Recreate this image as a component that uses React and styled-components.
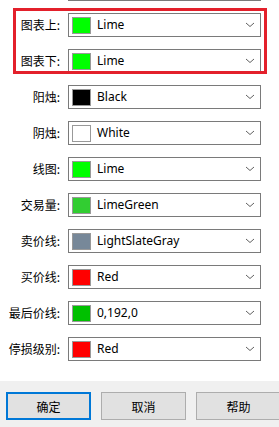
import styled, { createGlobalStyle } from "styled-components";

const GlobalStyle = createGlobalStyle`
    html, body {
        margin: 0;
        padding: 0;
        background: #ffffff;
    }
`;

const Dialog = styled.div`
    width: 279px;
    height: 427px;
    overflow: hidden;
    display: flex;
    flex-direction: column;
    font-family: "Segoe UI", "Noto Sans", "Noto Sans CJK SC", sans-serif;
    color: #000;
`;

const FormArea = styled.div`
    position: relative;
    height: 381px;
    overflow: hidden;
    background: #fff;
`;

const RowList = styled.div`
    display: flex;
    flex-direction: column;
    gap: 12px;
    margin-top: -23px;
`;

const Row = styled.div`
    display: grid;
    grid-template-columns: 60px 193px;
    column-gap: 8px;
    align-items: center;
    height: 24px;
`;

const Label = styled.label`
    text-align: right;
    font-family: "Noto Sans CJK SC", sans-serif;
    font-size: 12px;
    line-height: 16px;
    white-space: nowrap;
`;

const ColorSelect = styled.div`
    box-sizing: border-box;
    height: 24px;
    border: 1px solid #7a7a7a;
    background: #fff;
    display: flex;
    align-items: center;
    padding: 0 5px 0 3px;
`;

const Swatch = styled.span`
    box-sizing: border-box;
    width: 19px;
    height: 17px;
    border: 1px solid #999;
    background: ${(p) => p.color};
    flex: none;
`;

const ColorName = styled.span`
    flex: 1;
    margin-left: 6px;
    font-size: 12px;
    line-height: 16px;
    white-space: nowrap;
`;

const Chevron = styled.svg`
    width: 10px;
    height: 6px;
    flex: none;
`;

const Highlight = styled.div`
    position: absolute;
    left: 13px;
    top: 8px;
    width: 254px;
    height: 66px;
    box-sizing: border-box;
    border: 3px solid #e3202b;
    pointer-events: none;
`;

const Footer = styled.div`
    flex: 1;
    background: #f0f0f0;
    display: flex;
    gap: 10px;
    padding: 11px 0 0 6px;
`;

const Button = styled.button`
    box-sizing: border-box;
    flex: none;
    width: 85px;
    height: 28px;
    background: #e1e1e1;
    border: ${(p) => (p.$primary ? "2px solid #0078d7" : "1px solid #adadad")};
    font-family: "Noto Sans CJK SC", sans-serif;
    font-size: 12px;
    color: #000;
    padding: 0;
`;

// first entry is the row scrolled mostly out of view above the list
const rows = [
    { label: "", name: "", color: "#00ff00" },
    { label: "图表上:", name: "Lime", color: "#00ff00" },
    { label: "图表下:", name: "Lime", color: "#00ff00" },
    { label: "阳烛:", name: "Black", color: "#000000" },
    { label: "阴烛:", name: "White", color: "#ffffff" },
    { label: "线图:", name: "Lime", color: "#00ff00" },
    { label: "交易量:", name: "LimeGreen", color: "#32cd32" },
    { label: "卖价线:", name: "LightSlateGray", color: "#778899" },
    { label: "买价线:", name: "Red", color: "#ff0000" },
    { label: "最后价线:", name: "0,192,0", color: "rgb(0,192,0)" },
    { label: "停损级别:", name: "Red", color: "#ff0000" },
];

const App = () => {
    return (
        <>
            <GlobalStyle />
            <Dialog>
                <FormArea>
                    <RowList>
                        {rows.map((r, i) => (
                            <Row key={i}>
                                <Label>{r.label}</Label>
                                <ColorSelect>
                                    <Swatch color={r.color} />
                                    <ColorName>{r.name}</ColorName>
                                    <Chevron viewBox="0 0 10 6">
                                        <path
                                            d="M1 1 L5 4.5 L9 1"
                                            fill="none"
                                            stroke="#606060"
                                            strokeWidth="1"
                                        />
                                    </Chevron>
                                </ColorSelect>
                            </Row>
                        ))}
                    </RowList>
                    <Highlight />
                </FormArea>
                <Footer>
                    <Button $primary>确定</Button>
                    <Button>取消</Button>
                    <Button>帮助</Button>
                </Footer>
            </Dialog>
        </>
    );
};

export default App;
